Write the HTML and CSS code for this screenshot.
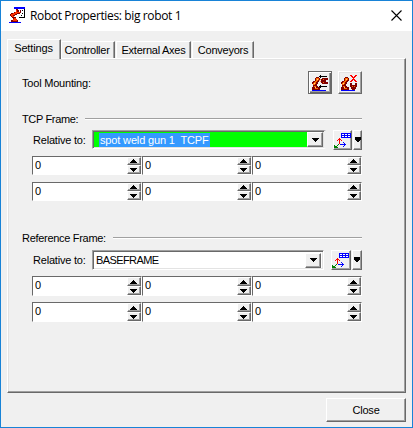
FILE: index.html
```html
<!DOCTYPE html>
<html lang="en">
<head>
<meta charset="utf-8">
<title>Robot Properties</title>
<link rel="stylesheet" href="styles.css">
</head>
<body>
<svg class="defs" width="0" height="0">
  <symbol id="arm" viewBox="0 0 9 13">
    <path fill="#800000" d="M4 0h3v1h1v3H7v1H6v2H5v2h1v1h2v3H0v-3h1V7H0V5h1V4h2V1h1z"/>
    <path fill="#ff6a00" d="M4 1h3v2H6v1H5v1H4v2H3v1H1V6h1V5h1V4h1zM2 9h2v1H2zM3 11h3v1H3z"/>
    <path fill="#ffd080" d="M5 2h1v1H5zM2 6h1v1H2zM3 10h1v1H3z"/>
  </symbol>
  <symbol id="frame" viewBox="0 0 18 17">
    <path fill="#0000ff" d="M7 1h10v5H7z"/>
    <path fill="#fff" d="M8 2h2v1H8zM11 2h2v1h-2zM14 2h2v1h-2zM8 4h2v1H8zM11 4h2v1h-2zM14 4h2v1h-2z"/>
    <path fill="#ff0000" d="M5 6h1v6H5zM4 7h3v1H4zM3 8h1v1H3zM7 8h1v1H7z"/>
    <path fill="#0000ff" d="M6 12h6v1H6zM9 10h1v1H9zM10 11h1v3h-1zM9 14h1v1H9z"/>
    <path fill="#008000" d="M4 12h1v1H4zM3 13h1v1H3zM2 14h1v1h1v1H0v-3h1v1h1z"/>
  </symbol>
  <symbol id="up" viewBox="0 0 7 4"><path d="M3 0h1v1h1v1h1v1h1v1H0V3h1V2h1V1h1z"/></symbol>
  <symbol id="down" viewBox="0 0 7 4"><path d="M0 0h7v1H6v1H5v1H4v1H3V3H2V2H1V1H0z"/></symbol>
</svg>
<div class="window">
  <header class="titlebar">
    <svg class="app-icon" width="16" height="16" viewBox="0 0 16 16">
      <path fill="#0000ff" d="M5 0h11v2H5zM0 15h12v1H0z"/>
      <path fill="#000" d="M15 2h1v9h-6v-1h5z"/>
      <path fill="#fff" d="M5 2h10v8H5z"/>
      <path fill="#000" d="M13 3h1v1h-1zM13 6h1v1h-1zM12 8h1v1h-1z"/>
      <path fill="#800000" d="M7 2h2v1h1v2h1V3h1v3h-1v1H8v1H6v1H5v1h2v2h1v1h1v2H2v-2h2v-2H3v-1H2V9H1V7h1V6h3V5h2z"/>
      <path fill="#ff3000" d="M7 3h1v2h3v1H8v1H6v1H4v1h1v2h2v1h1v2H4v-2h1v-2H3V9H2V7h2V6h2V5h1z"/>
    </svg>
    <h1 class="title">Robot Properties: big robot 1</h1>
    <svg class="close-x" width="11" height="11" viewBox="0 0 11 11"><path d="M.5.5l10 10M10.5.5l-10 10" fill="none" stroke="#000" stroke-width="1.1"/></svg>
  </header>
  <nav class="tabs">
    <span class="tab active">Settings</span>
    <span class="tab controller">Controller</span>
    <span class="tab axes">External Axes</span>
    <span class="tab conveyors">Conveyors</span>
  </nav>
  <main class="page">
    <div class="mounting">
      <span class="label tool">Tool Mounting:</span>
      <button class="tool-btn pressed"><svg width="18" height="17" viewBox="0 0 18 17">
        <use href="#arm" x="1" y="3" width="9" height="13"/>
        <path fill="#0000ff" d="M1 16h14v1H1z"/>
        <path fill="#000" d="M8 2h8v1H8zM9 1h1v3H9zM8 12h8v1H8zM9 11h1v3H9z"/>
        <path fill="#ff9060" d="M9 5h1v1H9zM8 6h1v1H8zM9 7h1v1H9z"/>
        <path fill="#800000" d="M10 5h1V4h6v2h-2v2h2v2h-6V9h-1z"/>
        <path fill="#ff6a00" d="M12 5h1v1h-1zM12 8h1v1h-1z"/>
      </svg></button>
      <button class="tool-btn"><svg width="18" height="17" viewBox="0 0 18 17">
        <use href="#arm" x="0" y="3" width="9" height="13"/>
        <path fill="#0000ff" d="M0 16h14v1H0z"/>
        <path fill="#ff0000" d="M9 1h2v1h1v1h1V2h1V1h2v1h-1v1h-1v1h-1v1h1v1h1v1h1v1h-2V7h-1V6h-1v1h-1v1H9V7h1V6h1V5h1V4h-1V3h-1V2H9z"/>
        <path fill="#800000" d="M9 9h2v2h3V9h2v4h-1v2h-1v1h-3v-1h-1v-2H9z"/>
        <path fill="#ff6a00" d="M11 12h1v1h-1zM13 12h1v1h-1z"/>
      </svg></button>
    </div>

    <section class="group tcp">
      <div class="heading"><span class="label">TCP Frame:</span><i class="rule"></i></div>
      <div class="relative-row">
        <span class="label rel">Relative to:</span>
        <div class="combo green"><span class="value">spot weld gun 1&nbsp; TCPF</span><button class="drop"><svg width="7" height="4"><use href="#down"/></svg></button></div>
        <button class="frame-btn"><svg width="18" height="17"><use href="#frame"/></svg></button>
        <button class="frame-menu"><svg width="6" height="6" viewBox="0 0 6 6"><path d="M0 0h6v3H5v1H4v1H2V4H1V3H0z"/></svg></button>
      </div>
      <div class="spins">
        <div class="spin"><span>0</span><div class="arrows"><button><svg width="7" height="4"><use href="#up"/></svg></button><button><svg width="7" height="4"><use href="#down"/></svg></button></div></div>
        <div class="spin"><span>0</span><div class="arrows"><button><svg width="7" height="4"><use href="#up"/></svg></button><button><svg width="7" height="4"><use href="#down"/></svg></button></div></div>
        <div class="spin"><span>0</span><div class="arrows"><button><svg width="7" height="4"><use href="#up"/></svg></button><button><svg width="7" height="4"><use href="#down"/></svg></button></div></div>
        <div class="spin"><span>0</span><div class="arrows"><button><svg width="7" height="4"><use href="#up"/></svg></button><button><svg width="7" height="4"><use href="#down"/></svg></button></div></div>
        <div class="spin"><span>0</span><div class="arrows"><button><svg width="7" height="4"><use href="#up"/></svg></button><button><svg width="7" height="4"><use href="#down"/></svg></button></div></div>
        <div class="spin"><span>0</span><div class="arrows"><button><svg width="7" height="4"><use href="#up"/></svg></button><button><svg width="7" height="4"><use href="#down"/></svg></button></div></div>
      </div>
    </section>

    <section class="group reference">
      <div class="heading"><span class="label">Reference Frame:</span><i class="rule"></i></div>
      <div class="relative-row">
        <span class="label rel">Relative to:</span>
        <div class="combo"><span class="value">BASEFRAME</span><button class="drop"><svg width="7" height="4"><use href="#down"/></svg></button></div>
        <button class="frame-btn"><svg width="18" height="17"><use href="#frame"/></svg></button>
        <button class="frame-menu"><svg width="6" height="6" viewBox="0 0 6 6"><path d="M0 0h6v3H5v1H4v1H2V4H1V3H0z"/></svg></button>
      </div>
      <div class="spins">
        <div class="spin"><span>0</span><div class="arrows"><button><svg width="7" height="4"><use href="#up"/></svg></button><button><svg width="7" height="4"><use href="#down"/></svg></button></div></div>
        <div class="spin"><span>0</span><div class="arrows"><button><svg width="7" height="4"><use href="#up"/></svg></button><button><svg width="7" height="4"><use href="#down"/></svg></button></div></div>
        <div class="spin"><span>0</span><div class="arrows"><button><svg width="7" height="4"><use href="#up"/></svg></button><button><svg width="7" height="4"><use href="#down"/></svg></button></div></div>
        <div class="spin"><span>0</span><div class="arrows"><button><svg width="7" height="4"><use href="#up"/></svg></button><button><svg width="7" height="4"><use href="#down"/></svg></button></div></div>
        <div class="spin"><span>0</span><div class="arrows"><button><svg width="7" height="4"><use href="#up"/></svg></button><button><svg width="7" height="4"><use href="#down"/></svg></button></div></div>
        <div class="spin"><span>0</span><div class="arrows"><button><svg width="7" height="4"><use href="#up"/></svg></button><button><svg width="7" height="4"><use href="#down"/></svg></button></div></div>
      </div>
    </section>
  </main>
  <footer class="footer"><button class="close-btn">Close</button></footer>
</div>
</body>
</html>
```
FILE: styles.css
```css
* { box-sizing: border-box; }
body {
  margin: 0;
  font: 11px/14px "Liberation Sans", sans-serif;
  color: #000;
  overflow: hidden;
}
svg { display: block; flex: none; shape-rendering: crispEdges; }
.close-x { shape-rendering: auto; }
.defs { position: absolute; }
button {
  display: flex;
  align-items: center;
  justify-content: center;
  flex: none;
  margin: 0;
  padding: 0;
  font: inherit;
  color: inherit;
  background: #f0f0f0;
  border: 1px solid;
  border-color: #fff #696969 #696969 #fff;
  box-shadow: inset -1px -1px #a0a0a0;
}
.window {
  width: 413px;
  height: 428px;
  display: flex;
  flex-direction: column;
  background: #f0f0f0;
  border: 1px solid #1883d7;
}
.titlebar {
  height: 30px;
  display: flex;
  align-items: center;
  padding: 0 10px 0 8px;
  background: #fff;
}
.app-icon { margin-top: -2px; }
.title {
  flex: 1;
  margin: 0 0 0 5px;
  font: 12px/16px "Open Sans", sans-serif;
  letter-spacing: -0.37px;
  white-space: nowrap;
}
.close-x { margin-top: -2px; }

.tabs {
  height: 27px;
  display: flex;
  align-items: flex-end;
  padding-left: 6px;
}
.tab {
  height: 17px;
  padding-top: 1px;
  text-align: center;
  white-space: nowrap;
  font-size: 11px;
  letter-spacing: -0.25px;
  border-top: 1px solid #fff;
  border-right: 1px solid #696969;
  border-left: 1px solid #fff;
  box-shadow: inset -1px 0 #a0a0a0;
}
.tab.active {
  width: 54px;
  height: 20px;
  margin-bottom: -1px;
  padding-right: 1px;
  letter-spacing: -0.15px;
  z-index: 1;
  background: #f0f0f0;
}
.controller { width: 54px; padding-right: 2px; }
.axes { width: 75px; margin-left: 1px; }
.conveyors { width: 62px; margin-left: 1px; }

.page {
  width: 399px;
  height: 335px;
  margin-left: 6px;
  padding: 12px 43px 0 14px;
  border: 1px solid;
  border-color: #fff #696969 #696969 #fff;
  box-shadow: inset -1px -1px #a0a0a0, inset 1px 1px #e3e3e3;
}
.label, .value, .close-btn {
  font-size: 11px;
  letter-spacing: -0.2px;
  white-space: nowrap;
}
.mounting { display: flex; align-items: center; height: 23px; gap: 6px; }
.tool { flex: 1; }
.tool-btn { width: 24px; height: 23px; box-shadow: inset -1px -1px #a0a0a0, inset 1px 1px #e3e3e3; }
.tool-btn.pressed { border-color: #696969; box-shadow: inset 1px 1px #fff, inset -1px -1px #696969, inset -2px -2px #a0a0a0; }

.heading { display: flex; align-items: center; height: 14px; gap: 7px; }
.rule { flex: 1; height: 2px; background: #a0a0a0; border-bottom: 1px solid #fff; }
.tcp { margin-top: 18px; }
.tcp .heading .label { letter-spacing: -0.35px; }
.reference { margin-top: 30px; }
.reference .heading .label { letter-spacing: -0.3px; }
.relative-row { display: flex; align-items: flex-start; height: 20px; margin-top: 4px; }
.reference .relative-row { margin-top: 5px; }
.rel { width: 70px; padding-left: 11px; line-height: 20px; }
.combo {
  display: flex;
  width: 234px;
  height: 19px;
  padding: 1px 2px 1px 1px;
  align-items: center;
  background: #fff;
  border: 1px solid;
  border-color: #a0a0a0 #fff #fff #a0a0a0;
  box-shadow: inset 1px 1px #696969, inset -1px -1px #e3e3e3;
}
.combo .value { padding-left: 2px; margin-right: auto; letter-spacing: -0.6px; }
.combo.green { background: #00ff00; padding-right: 1px; border-right: 2px solid #f0f0f0; }
.combo.green .value { margin-left: 5px; padding: 0 1px 0 1px; color: #fff; background: #3399ff; letter-spacing: -0.15px; }
.drop { width: 16px; height: 15px; }
.frame-btn { width: 20px; height: 20px; margin-left: auto; }
.tcp .frame-btn { width: 19px; }
.frame-menu { width: 9px; height: 20px; margin-left: 1px; }

.spins {
  display: grid;
  grid-template-columns: repeat(3, 110px);
  grid-auto-rows: 19px;
  row-gap: 7px;
  margin: 6px 0 0 10px;
}
.reference .spins { grid-auto-rows: 20px; row-gap: 6px; }
.reference .combo { width: 232px; height: 20px; }
.reference .frame-menu { width: 10px; }
.spin {
  display: flex;
  justify-content: space-between;
  background: #fff;
  border: 1px solid;
  border-color: #696969 #fff #fff #696969;
  padding: 0 0 0 2px;
}
.spin span { font-size: 11px; line-height: 17px; }
.arrows { display: flex; flex-direction: column; }
.arrows button { width: 14px; height: 8px; }
.arrows button + button { height: 9px; }
.arrows svg { margin-left: -1px; }
.reference .arrows button { height: 9px; }

.footer { display: flex; justify-content: flex-end; padding: 5px 6px 0; }
.close-btn { width: 80px; height: 24px; }
```
